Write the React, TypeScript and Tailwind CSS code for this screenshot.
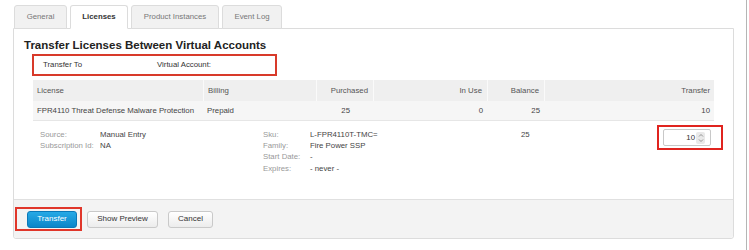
import React from "react";

const F = { fontFamily: '"Liberation Sans", Arial, Helvetica, sans-serif' };

function Tab({ label, w, active }: { label: string; w: string; active?: boolean }) {
  return active ? (
    <div
      className={`${w} relative z-10 -mb-px flex h-[24px] items-center justify-center rounded-t-[3px] border border-[#dcdcdc] border-b-white bg-white text-[7.8px] font-bold text-[#333]`}
    >
      {label}
    </div>
  ) : (
    <div
      className={`${w} -mb-px flex h-[24px] items-center justify-center rounded-t-[3px] border border-[#dcdcdc] bg-[#f1f1f1] text-[7.8px] text-[#777]`}
    >
      {label}
    </div>
  );
}

function Spinner() {
  return (
    <div className="flex h-[12px] w-[9px] flex-col items-center justify-center rounded-[2px] bg-[#e9e9e9]">
      <svg width="6" height="10" viewBox="0 0 6 10" fill="none" stroke="#8a8a8a" strokeWidth="0.9">
        <path d="M1 3.5 L3 1.5 L5 3.5" />
        <path d="M1 6.5 L3 8.5 L5 6.5" />
      </svg>
    </div>
  );
}

export default function App() {
  return (
    <div className="h-[250px] w-[749px] bg-white" style={F}>
      <div className="h-[250px] w-[747px] border-r border-[#b5b5b5]">
        <div className="flex gap-[3px] pl-[14px] pt-[5px]">
          <Tab label="General" w="w-[53px]" />
          <Tab label="Licenses" w="w-[58px]" active />
          <Tab label="Product Instances" w="w-[88px]" />
          <Tab label="Event Log" w="w-[60px]" />
        </div>
        <div className="ml-[13px] flex h-[211px] w-[721px] flex-col rounded-b-[3px] border border-[#dcdcdc] bg-white">
          <div className="flex-1 pl-[10px] pt-[9px]">
            <div className="text-[11.5px] font-bold leading-[14px] text-[#222]">
              Transfer Licenses Between Virtual Accounts
            </div>
            <div className="ml-[8px] mt-[2px] flex h-[22px] w-[245px] items-center border-2 border-[#d83a2a] text-[7.8px] text-[#333]">
              <span className="w-[123px] shrink-0 pl-[9px]">Transfer To</span>
              <span>Virtual Account:</span>
            </div>
            <div className="ml-[9px] mt-[4px] w-[681px] text-[7.8px] text-[#444]">
              <div className="flex h-[21px] items-center bg-[#efefef] text-[#555]">
                <div className="w-[170px] pl-[4px]">License</div>
                <div className="flex h-full w-[113px] items-center border-l border-[#fafafa] pl-[4px]">Billing</div>
                <div className="flex h-full w-[57px] items-center justify-end border-l border-[#fafafa] pr-[5px]">Purchased</div>
                <div className="flex h-full w-[114px] items-center justify-end border-l border-[#fafafa] pr-[5px]">In Use</div>
                <div className="flex h-full w-[57px] items-center justify-end border-l border-[#fafafa] pr-[5px]">Balance</div>
                <div className="flex h-full flex-1 items-center justify-end border-l border-[#fafafa] pr-[4px]">Transfer</div>
              </div>
              <div className="flex h-[20px] items-center border-b border-[#e6e6e6] bg-[#f6f6f6]">
                <div className="w-[170px] pl-[4px]">FPR4110 Threat Defense Malware Protection</div>
                <div className="w-[113px] pl-[4px]">Prepaid</div>
                <div className="w-[57px] pr-[23px] text-right">25</div>
                <div className="w-[114px] pr-[4px] text-right">0</div>
                <div className="w-[57px] pr-[4px] text-right">25</div>
                <div className="flex-1 pr-[4px] text-right">10</div>
              </div>
              <div className="flex pt-[8px] leading-[11.2px]">
                <div className="flex w-[230px] shrink-0 pl-[7px]">
                  <div className="w-[60px] shrink-0 text-[#999]">
                    <div>Source:</div>
                    <div>Subscription Id:</div>
                  </div>
                  <div>
                    <div>Manual Entry</div>
                    <div>NA</div>
                  </div>
                </div>
                <div className="flex w-[258px] shrink-0">
                  <div className="w-[47px] shrink-0 text-[#999]">
                    <div>Sku:</div>
                    <div>Family:</div>
                    <div>Start Date:</div>
                    <div>Expires:</div>
                  </div>
                  <div>
                    <div>L-FPR4110T-TMC=</div>
                    <div>Fire Power SSP</div>
                    <div>-</div>
                    <div>- never -</div>
                  </div>
                </div>
                <div className="w-[100px] shrink-0">25</div>
                <div className="-mt-[4px] ml-[36px] flex h-[25px] w-[66px] shrink-0 items-center border-2 border-[#e0241f] pl-[4px]">
                  <div className="flex h-[17px] w-[48px] items-center justify-end gap-[1px] rounded-[2px] border border-[#c8c8c8] bg-white pr-[5px] text-[#333]">
                    <span>10</span>
                    <Spinner />
                  </div>
                </div>
              </div>
            </div>
          </div>
          <div className="flex h-[39px] items-center gap-[5px] rounded-b-[3px] border-t border-[#e0e0e0] bg-[#f3f3f3] pl-[1px] text-[8px]">
            <div className="flex h-[24px] w-[67px] items-center justify-end border-2 border-[#e0362a] pr-[3px]">
              <div className="flex h-[17px] w-[50px] items-center justify-center rounded-[3px] border border-[#0a78b8] bg-gradient-to-b from-[#25a9e6] to-[#0a86c9] text-white">
                Transfer
              </div>
            </div>
            <div className="flex h-[17px] w-[71px] items-center justify-center rounded-[3px] border border-[#c9c9c9] bg-gradient-to-b from-white to-[#ececec] text-[#333]">
              Show Preview
            </div>
            <div className="ml-[5px] flex h-[17px] w-[45px] items-center justify-center rounded-[3px] border border-[#c9c9c9] bg-gradient-to-b from-white to-[#ececec] text-[#333]">
              Cancel
            </div>
          </div>
        </div>
      </div>
    </div>
  );
}
